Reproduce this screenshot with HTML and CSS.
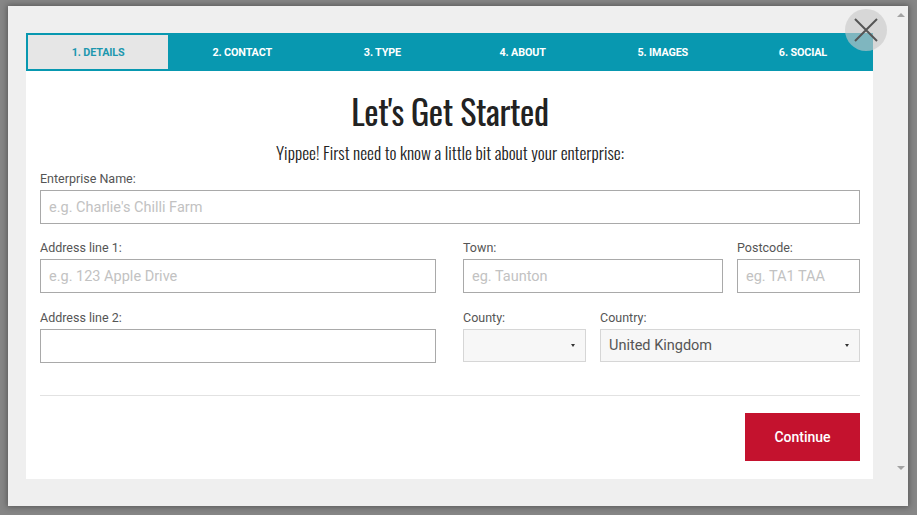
FILE: index.html
```html
<!DOCTYPE html>
<html lang="en">
<head>
<meta charset="utf-8">
<title>Let's Get Started</title>
<link rel="stylesheet" href="styles.css">
</head>
<body>
<div class="dialog">
  <div class="dialog-body">
    <div class="panel">
      <nav class="steps">
        <div class="step active">1. DETAILS</div>
        <div class="step">2. CONTACT</div>
        <div class="step">3. TYPE</div>
        <div class="step">4. ABOUT</div>
        <div class="step">5. IMAGES</div>
        <div class="step">6. SOCIAL</div>
      </nav>
      <div class="content">
        <h1 class="title">Let's Get Started</h1>
        <p class="subtitle">Yippee! First need to know a little bit about your enterprise:</p>
        <form class="form">
          <div class="field">
            <label class="label">Enterprise Name:</label>
            <input class="input" type="text" placeholder="e.g. Charlie's Chilli Farm">
          </div>
          <div class="row">
            <div class="field col-left">
              <label class="label">Address line 1:</label>
              <input class="input" type="text" placeholder="e.g. 123 Apple Drive">
            </div>
            <div class="col-right">
              <div class="field w-wide">
                <label class="label">Town:</label>
                <input class="input" type="text" placeholder="eg. Taunton">
              </div>
              <div class="field w-narrow">
                <label class="label">Postcode:</label>
                <input class="input" type="text" placeholder="eg. TA1 TAA">
              </div>
            </div>
          </div>
          <div class="row row-last">
            <div class="field col-left">
              <label class="label">Address line 2:</label>
              <input class="input" type="text">
            </div>
            <div class="col-right">
              <div class="field w-narrow">
                <label class="label">County:</label>
                <div class="select"><span class="select-text"></span><span class="caret"></span></div>
              </div>
              <div class="field w-wide">
                <label class="label">Country:</label>
                <div class="select"><span class="select-text">United Kingdom</span><span class="caret"></span></div>
              </div>
            </div>
          </div>
          <hr class="divider">
          <div class="actions">
            <button class="btn-continue" type="button">Continue</button>
          </div>
        </form>
      </div>
    </div>
  </div>
  <div class="scrollbar">
    <span class="arrow arrow-up"></span>
    <span class="arrow arrow-down"></span>
  </div>
  <button class="close" type="button" aria-label="Close">
    <svg width="24" height="24" viewBox="0 0 24 24"><path d="M1 1 L23 23 M23 1 L1 23" stroke="#555" stroke-width="2" fill="none"/></svg>
  </button>
</div>
</body>
</html>
```
FILE: styles.css
```css
* { box-sizing: border-box; }

html, body {
  margin: 0;
  padding: 0;
}

body {
  background: #868686;
  font-family: Roboto, "Liberation Sans", Arial, sans-serif;
  width: 917px;
  height: 515px;
  overflow: hidden;
  padding: 6px 0 0 8px;
}

.dialog {
  position: relative;
  width: 900px;
  height: 500px;
  background: #efefef;
  display: flex;
  box-shadow: 0 0 6px 1px rgba(0, 0, 0, 0.35);
}

.dialog-body {
  width: 885px;
  padding: 27px 20px 27px 18px;
}

.panel {
  width: 847px;
  height: 446px;
  background: #fff;
}

.steps {
  display: flex;
  height: 38px;
  background: #0898b0;
}

.step {
  flex: 1;
  display: flex;
  align-items: center;
  justify-content: center;
  color: #fff;
  font-size: 10.8px;
  font-weight: 700;
  letter-spacing: -0.15px;
}

.step.active {
  background: #e6e6e6;
  color: #1d97ae;
  margin: 2px 4px 2px 2px;
}

.content {
  padding: 0 13px 0 14px;
}

.title {
  margin: 0;
  padding-top: 19px;
  text-align: center;
  font-family: "Oswald", "Liberation Sans Narrow", "DejaVu Sans Condensed", sans-serif;
  font-weight: 400;
  font-size: 34px;
  line-height: 42px;
  color: #222;
  letter-spacing: -0.4px;
}

.subtitle {
  margin: 9px 0 0;
  text-align: center;
  font-family: "Oswald", "Liberation Sans Narrow", "DejaVu Sans Condensed", sans-serif;
  font-weight: 300;
  font-size: 17.4px;
  line-height: 22px;
  color: #222;
}

.form {
  margin-top: 8px;
}

.field {
  display: flex;
  flex-direction: column;
}

.label {
  font-size: 12.5px;
  line-height: 15px;
  color: #555;
  margin-bottom: 4px;
}

.input {
  height: 34px;
  border: 1px solid #a9a9a9;
  background: #fff;
  padding: 0 8px;
  font-family: Roboto, "Liberation Sans", sans-serif;
  font-size: 14.5px;
  color: #555;
  outline: none;
}

.input::placeholder {
  color: #c2c2c2;
}

.row {
  display: flex;
  gap: 27px;
  margin-top: 16px;
}

.row-last {
  margin-top: 17px;
}

.col-left {
  width: 396px;
}

.col-right {
  flex: 1;
  display: flex;
  gap: 14px;
}

.w-wide {
  width: 260px;
}

.w-narrow {
  width: 123px;
}

.select {
  height: 33px;
  border: 1px solid #d6d6d6;
  background: #f7f7f7;
  display: flex;
  align-items: center;
  justify-content: space-between;
  padding: 0 10px 0 8px;
  font-size: 14.5px;
  color: #555;
}

.caret {
  width: 0;
  height: 0;
  border-left: 2.5px solid transparent;
  border-right: 2.5px solid transparent;
  border-top: 3px solid #333;
}

.divider {
  margin: 32px 0 0;
  border: 0;
  border-top: 1px solid #e2e2e2;
  height: 0;
}

.actions {
  display: flex;
  justify-content: flex-end;
  margin-top: 17px;
}

.btn-continue {
  width: 115px;
  height: 48px;
  border: 0;
  background: #c4122e;
  color: #fff;
  font-family: Roboto, "Liberation Sans", sans-serif;
  font-size: 14px;
  font-weight: 500;
  cursor: pointer;
}

.scrollbar {
  width: 15px;
  display: flex;
  flex-direction: column;
  justify-content: space-between;
  align-items: center;
  padding: 7px 0 36px;
}

.arrow {
  width: 0;
  height: 0;
  border-left: 4px solid transparent;
  border-right: 4px solid transparent;
}

.arrow-up {
  border-bottom: 4px solid #a3a3a3;
}

.arrow-down {
  border-top: 4px solid #a3a3a3;
}

.close {
  position: absolute;
  left: 837px;
  top: 3px;
  width: 42px;
  height: 42px;
  border-radius: 50%;
  border: 0;
  padding: 0;
  background: rgba(200, 200, 200, 0.62);
  display: flex;
  align-items: center;
  justify-content: center;
  cursor: pointer;
}
```
